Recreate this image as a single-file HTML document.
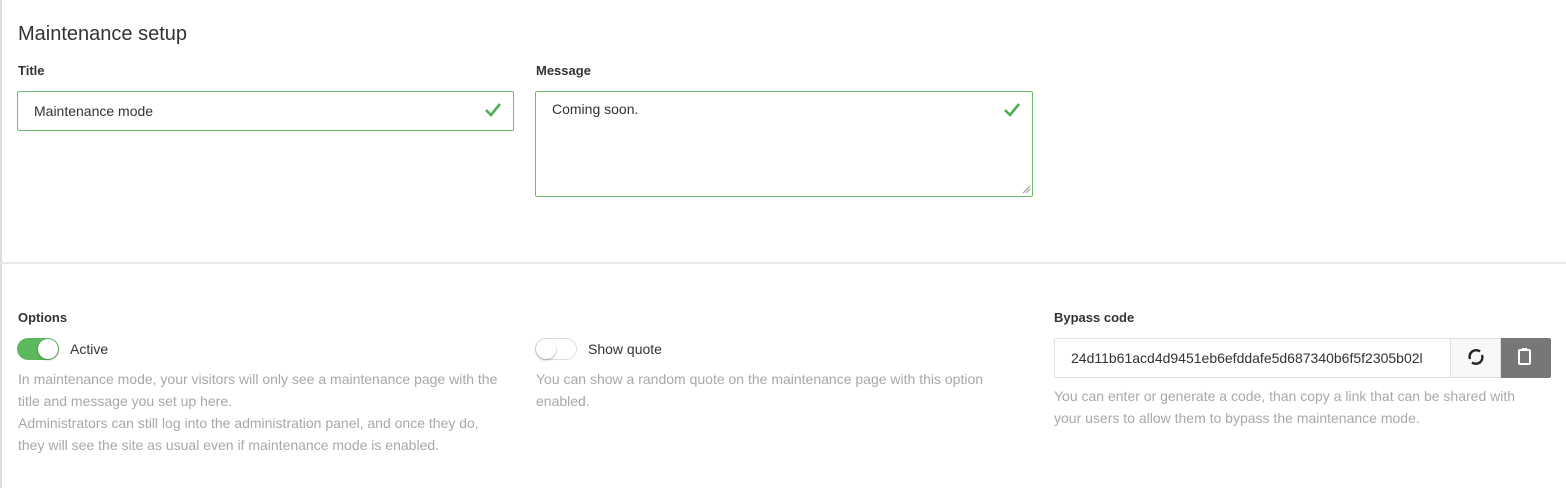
<!DOCTYPE html>
<html><head><meta charset="utf-8"><style>
*{box-sizing:border-box;margin:0;padding:0}
body{width:1566px;height:488px;background:#fff;font-family:"Liberation Sans",sans-serif;color:#333;position:relative;overflow:hidden}
.lb{position:absolute;left:0;top:0;width:2px;height:488px;background:#ddd}
.abs{position:absolute}
h1{position:absolute;left:18px;top:23px;font-size:20px;font-weight:normal;color:#333}
.lab{position:absolute;font-size:13px;font-weight:bold;color:#333}
.inp{position:absolute;border:1px solid #6cc070;border-radius:2px;font-size:14px;color:#333;padding-left:16px}
.hr{position:absolute;left:0;top:262px;width:1566px;height:2px;background:#e8e8e8}
.desc{position:absolute;font-size:14px;line-height:22px;color:#a8a8a8}
.tog{position:absolute;width:42px;height:22px;border-radius:11px}
.knob{position:absolute;top:1px;width:20px;height:20px;border-radius:50%;background:#fff;box-shadow:0 1px 2px rgba(0,0,0,.3)}
</style></head><body>
<div class="lb"></div>
<h1>Maintenance setup</h1>
<div class="lab" style="left:18px;top:63px">Title</div>
<div class="inp" style="left:17px;top:91px;width:497px;height:40px;line-height:38px">Maintenance mode</div>
<svg class="abs" style="left:484px;top:102px" width="18" height="16" viewBox="0 0 18 16"><path d="M2 8l5 5L16 2" fill="none" stroke="#4caf50" stroke-width="2.6"/></svg>
<div class="lab" style="left:536px;top:63px">Message</div>
<div class="inp" style="left:535px;top:91px;width:498px;height:106px;padding-top:9px">Coming soon.</div>
<svg class="abs" style="left:1003px;top:102px" width="18" height="16" viewBox="0 0 18 16"><path d="M2 8l5 5L16 2" fill="none" stroke="#4caf50" stroke-width="2.6"/></svg>
<svg class="abs" style="left:1022px;top:185px" width="9" height="9"><path d="M1 8L8 1M4 8L8 4" stroke="#999" stroke-width="1"/></svg>
<div class="hr"></div>

<div class="lab" style="left:18px;top:310px">Options</div>
<div class="tog" style="left:17px;top:338px;background:#5cb85c"><div class="knob" style="left:21px"></div></div>
<div class="abs" style="left:70px;top:341px;font-size:14px">Active</div>
<div class="desc" style="left:18px;top:368px;width:488px">In maintenance mode, your visitors will only see a maintenance page with the title and message you set up here.<br>Administrators can still log into the administration panel, and once they do, they will see the site as usual even if maintenance mode is enabled.</div>

<div class="tog" style="left:535px;top:338px;background:#fff;border:1px solid #ddd"><div class="knob" style="left:0px;top:0"></div></div>
<div class="abs" style="left:588px;top:341px;font-size:14px">Show quote</div>
<div class="desc" style="left:536px;top:368px;width:470px">You can show a random quote on the maintenance page with this option enabled.</div>

<div class="lab" style="left:1054px;top:310px">Bypass code</div>
<div class="abs" style="left:1054px;top:338px;width:397px;height:40px;border:1px solid #e0e0e0;border-radius:2px 0 0 2px;font-size:14px;line-height:38px;padding-left:16px;color:#333;white-space:nowrap;overflow:hidden">24d11b61acd4d9451eb6efddafe5d687340b6f5f2305b02l</div>
<div class="abs" style="left:1450px;top:338px;width:51px;height:40px;border:1px solid #e0e0e0;background:#f8f8f8"></div>
<svg class="abs" style="left:1466px;top:347px" width="20" height="20" viewBox="0 0 20 20"><path d="M4 12A6.5 6.5 0 0 1 14 4.5" fill="none" stroke="#222" stroke-width="2.4"/><path d="M16 8A6.5 6.5 0 0 1 6 15.5" fill="none" stroke="#222" stroke-width="2.4"/></svg>
<div class="abs" style="left:1501px;top:338px;width:50px;height:40px;background:#777;border-radius:0 2px 2px 0"></div>
<svg class="abs" style="left:1517px;top:347px" width="16" height="20" viewBox="0 0 16 20"><rect x="2" y="3" width="11" height="14" rx="1" fill="none" stroke="#fff" stroke-width="2"/><rect x="5" y="1" width="5" height="3" fill="#fff"/></svg>
<div class="desc" style="left:1054px;top:385px;width:490px">You can enter or generate a code, than copy a link that can be shared with your users to allow them to bypass the maintenance mode.</div>
</body></html>
